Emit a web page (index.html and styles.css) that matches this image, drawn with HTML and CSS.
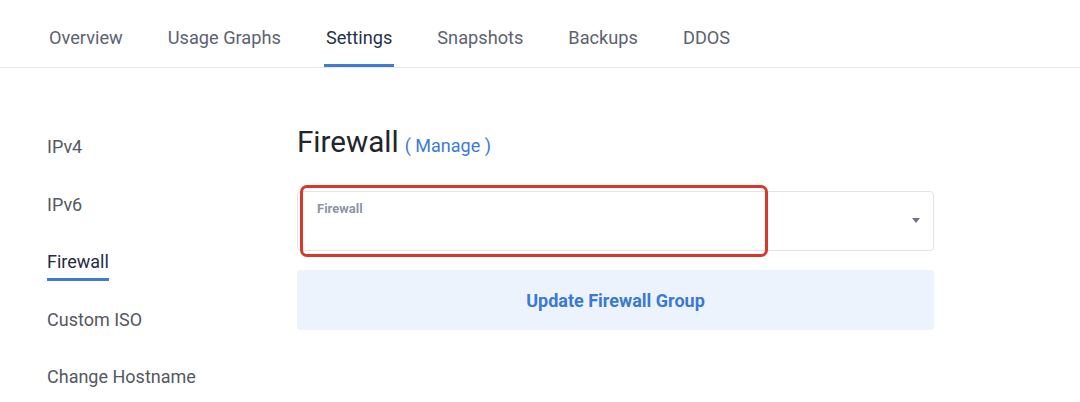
FILE: index.html
```html
<!DOCTYPE html>
<html lang="en">
<head>
<meta charset="utf-8">
<title>Settings - Firewall</title>
<link rel="stylesheet" href="styles.css">
</head>
<body>
  <nav class="tabs">
    <a class="tab">Overview</a>
    <a class="tab">Usage Graphs</a>
    <a class="tab tab-active">Settings</a>
    <a class="tab">Snapshots</a>
    <a class="tab">Backups</a>
    <a class="tab">DDOS</a>
  </nav>
  <div class="main">
    <aside class="side">
      <a class="side-item">IPv4</a>
      <a class="side-item">IPv6</a>
      <a class="side-item side-active">Firewall</a>
      <a class="side-item">Custom ISO</a>
      <a class="side-item">Change Hostname</a>
    </aside>
    <section class="content">
      <h1 class="title">Firewall <a class="manage">( Manage )</a></h1>
      <div class="field">
        <span class="field-label">Firewall</span>
        <span class="caret"></span>
        <div class="highlight"></div>
      </div>
      <button class="btn">Update Firewall Group</button>
    </section>
  </div>
</body>
</html>
```
FILE: styles.css
```css
* { box-sizing: border-box; }
body {
  margin: 0;
  font-family: Roboto, "Liberation Sans", sans-serif;
  background: #fff;
  color: #333;
}
.tabs {
  display: flex;
  gap: 41px;
  padding-left: 47px;
  border-bottom: 1px solid #e6e7ea;
  height: 68px;
}
.tab {
  display: block;
  padding: 28px 2px 16px;
  line-height: 20px;
  font-size: 18.2px;
  color: #5c6270;
  border-bottom: 3px solid transparent;
  height: 67px;
}
.tab-active {
  color: #263148;
  border-bottom-color: #3f7bd1;
}
.main {
  display: flex;
}
.side {
  width: 250px;
  margin-left: 47px;
  padding-top: 69px;
  display: flex;
  flex-direction: column;
  align-items: flex-start;
  gap: 28.5px;
}
.side-item {
  display: block;
  font-size: 18px;
  line-height: 20px;
  color: #55585f;
  padding-bottom: 6px;
  border-bottom: 3px solid transparent;
}
.side-active {
  color: #1f2b45;
  border-bottom-color: #3f7bd1;
}
.content {
  width: 637px;
  padding-top: 57px;
}
.title {
  display: flex;
  align-items: baseline;
  gap: 6px;
  height: 34px;
  margin: 0;
  font-size: 29.6px;
  line-height: 34px;
  font-weight: 400;
  color: #22252b;
}
.manage {
  font-size: 18px;
  line-height: 20px;
  color: #3b7bd4;
}
.field {
  position: relative;
  margin-top: 32px;
  height: 60px;
  border: 1px solid #e1e3e8;
  border-radius: 4px;
  padding: 9px 19px;
}
.field-label {
  display: block;
  font-size: 13px;
  line-height: 16px;
  font-weight: 700;
  color: #8e95a5;
}
.caret {
  position: absolute;
  right: 13px;
  top: 26px;
  width: 0;
  height: 0;
  border-left: 4.5px solid transparent;
  border-right: 4.5px solid transparent;
  border-top: 5px solid #6f7585;
}
.highlight {
  position: absolute;
  left: 2px;
  top: -7px;
  width: 468px;
  height: 72px;
  border: 3px solid #d8382c;
  border-radius: 7px;
}
.btn {
  display: block;
  width: 100%;
  margin-top: 19px;
  height: 60px;
  border: none;
  border-radius: 3px;
  background: #edf3fc;
  font-family: Roboto, "Liberation Sans", sans-serif;
  font-size: 18px;
  font-weight: 700;
  color: #3b78d2;
}
```
